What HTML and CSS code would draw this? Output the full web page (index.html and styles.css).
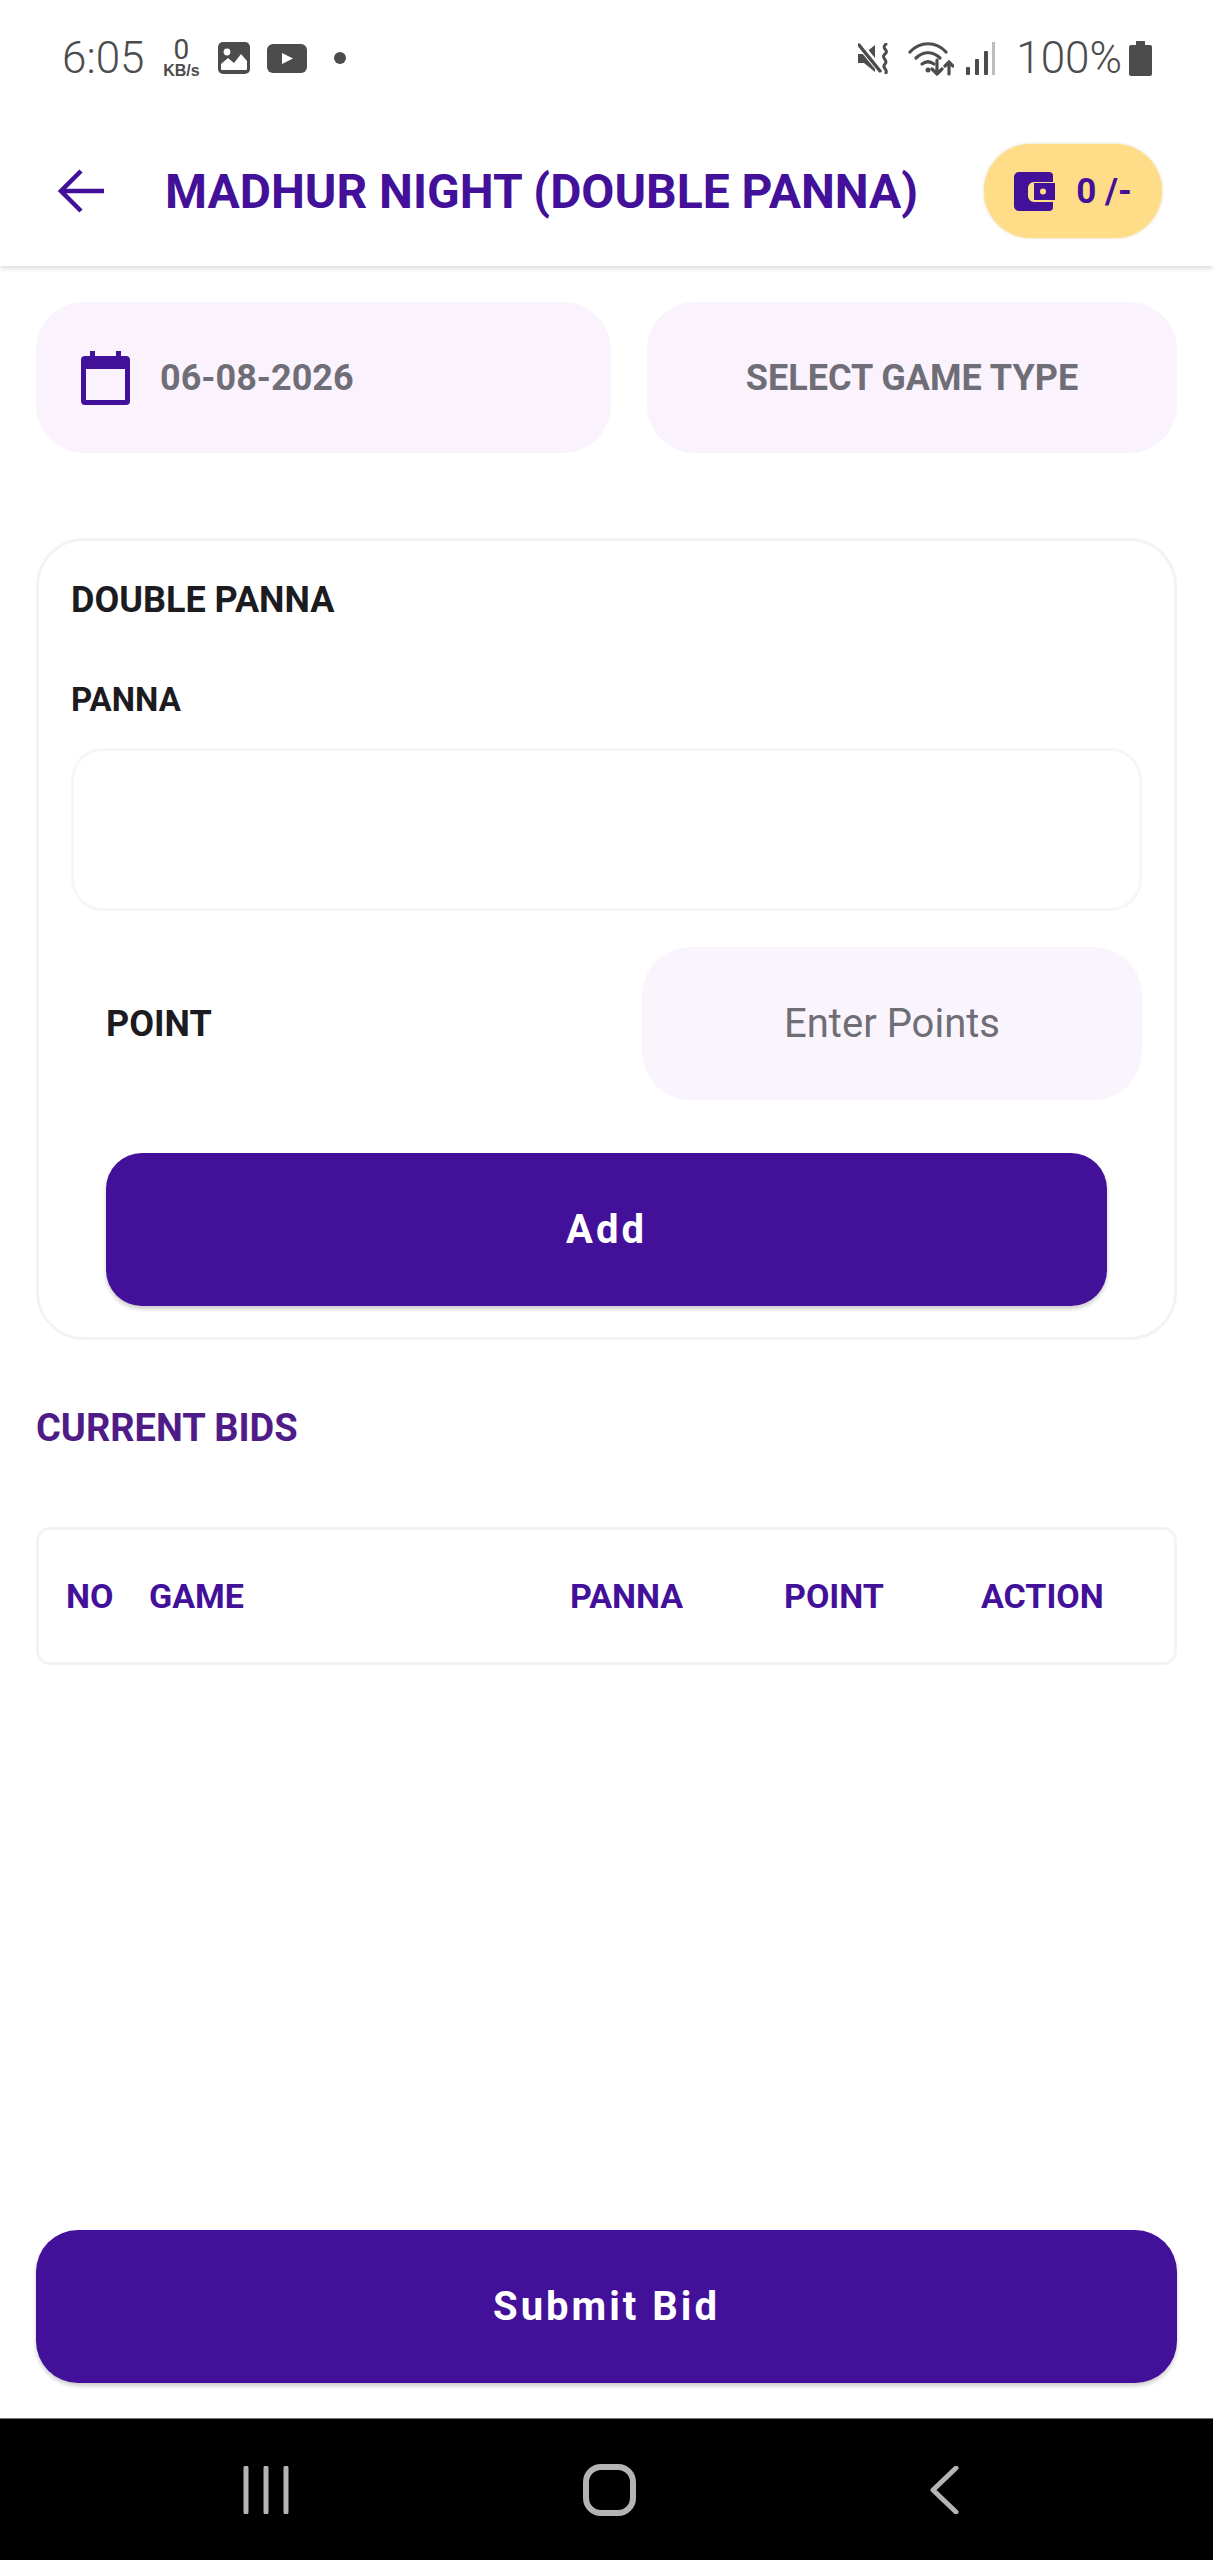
FILE: index.html
```html
<!DOCTYPE html>
<html lang="en">
<head>
  <meta charset="UTF-8">
  <meta name="viewport" content="width=device-width, initial-scale=1">
  <title>Madhur Night (Double Panna)</title>
  <link rel="stylesheet" href="styles.css">
</head>
<body>
  <div class="page">
    <header class="top">
      <div class="status">
        <span class="clock">6:05</span>
        <span class="speed"><b>0</b><i>KB/s</i></span>
        <svg class="ic-photo" viewBox="0 0 32 32"><rect width="32" height="32" rx="5" fill="#4c4c4c"/><circle cx="9" cy="10" r="3.4" fill="#fff"/><path d="M3 27v-5l7-6 6 5 7-9 6 7v8a1 1 0 0 1-1 1H4a1 1 0 0 1-1-1z" fill="#fff"/></svg>
        <svg class="ic-yt" viewBox="0 0 40 29"><rect width="40" height="29" rx="6" fill="#4c4c4c"/><path d="M15 9l11 5.500-11 5.500z" fill="#fff"/></svg>
        <span class="dot"></span>
        <span class="grow"></span>
        <svg class="ic-mute" viewBox="0 0 34 31"><path d="M0 11h6l11-9v27l-11-9H0z" fill="#4c4c4c"/><path d="M1 1l23 28" stroke="#fff" stroke-width="7"/><path d="M1 2l21 26" stroke="#4c4c4c" stroke-width="3.500" stroke-linecap="round"/><path d="M28 1c-6 5 4 6-1 10s4 6 0 10 3 5 1 9" fill="none" stroke="#4c4c4c" stroke-width="3" stroke-linecap="round"/></svg>
        <svg class="ic-wifi" viewBox="0 0 46 35"><g fill="none" stroke="#4c4c4c" stroke-width="3.200" stroke-linecap="round"><path d="M2 11C12 0 28 0 38 11"/><path d="M8 17c7-7 17-7 24 0"/><path d="M14 23c4-3 8-3 12 0"/><path d="M29 19v14M24 28l5 5 5-5"/><path d="M41 33V21M37 25l4-4 4 4"/></g><circle cx="20" cy="29" r="2.500" fill="#4c4c4c"/></svg>
        <svg class="ic-signal" viewBox="0 0 31 33"><rect x="1" y="25" width="4" height="8" rx="1" fill="#4c4c4c"/><rect x="10" y="17" width="4" height="16" rx="1" fill="#4c4c4c"/><rect x="19" y="9" width="4" height="24" rx="1" fill="#4c4c4c"/><rect x="27" y="0" width="3" height="33" fill="#bdbdbd"/></svg>
        <span class="batt-pct">100%</span>
        <svg class="ic-batt" viewBox="0 0 23 35"><path d="M7 0h9v4h5a2 2 0 0 1 2 2v27a2 2 0 0 1-2 2H2a2 2 0 0 1-2-2V6a2 2 0 0 1 2-2h5z" fill="#4c4c4c"/></svg>
      </div>
      <div class="appbar">
        <svg class="ic-back" viewBox="0 0 48 46"><path d="M46 23H4M23 3L3 23l20 20" fill="none" stroke="#43109a" stroke-width="4.500"/></svg>
        <h1 class="title">MADHUR NIGHT (DOUBLE PANNA)</h1>
        <div class="wallet">
          <svg class="ic-wallet" viewBox="0 0 41 39"><path d="M5 0h30a4 4 0 0 1 4 4v6H20a6 6 0 0 0-6 6v8a6 6 0 0 0 6 6h19v5a4 4 0 0 1-4 4H5a5 5 0 0 1-5-5V5a5 5 0 0 1 5-5z" fill="#43109a"/><path d="M20 11h21v17H20z" fill="#43109a"/><circle cx="29" cy="19.500" r="3" fill="#ffdd88"/></svg>
          <span>0 /-</span>
        </div>
      </div>
    </header>

    <main class="content">
      <div class="picker-row">
        <div class="picker">
          <svg class="ic-cal" viewBox="0 0 49 54"><path d="M9 0h5v5h21V0h5v5h5a4 4 0 0 1 4 4v41a4 4 0 0 1-4 4H4a4 4 0 0 1-4-4V9a4 4 0 0 1 4-4h5zM5 18v31h39V18z" fill="#43109a"/></svg>
          <span>06-08-2026</span>
        </div>
        <div class="picker center"><span>SELECT GAME TYPE</span></div>
      </div>

      <section class="card">
        <h2 class="card-title">DOUBLE PANNA</h2>
        <div class="label">PANNA</div>
        <div class="panna-input"></div>
        <div class="point-row">
          <div class="label">POINT</div>
          <div class="point-input">Enter Points</div>
        </div>
        <button class="btn btn-add">Add</button>
      </section>

      <h2 class="bids-title">CURRENT BIDS</h2>
      <div class="bids">
        <span>NO</span>
        <span>GAME</span>
        <span>PANNA</span>
        <span>POINT</span>
        <span>ACTION</span>
      </div>

      <button class="btn btn-submit">Submit Bid</button>
    </main>

    <footer class="navbar">
      <svg class="ic-recent" viewBox="0 0 46 48"><path d="M3 2v44M23 2v44M43 2v44" stroke="#b4b4b4" stroke-width="5" stroke-linecap="round"/></svg>
      <svg class="ic-home" viewBox="0 0 53 52"><rect x="3" y="3" width="47" height="46" rx="15" fill="none" stroke="#b4b4b4" stroke-width="6"/></svg>
      <svg class="ic-navback" viewBox="0 0 29 48"><path d="M26 2L3 24l23 22" fill="none" stroke="#b4b4b4" stroke-width="5" stroke-linecap="round" stroke-linejoin="round"/></svg>
    </footer>
  </div>
</body>
</html>
```

FILE: styles.css
```css
body {
  margin: 0;
  padding: 0;
  background-color: #fff;
  font-family: Roboto, "Liberation Sans", sans-serif;
}
.page {
  display: flex;
  flex-direction: column;
  height: 2560px;
  overflow: hidden;
}

/* status bar + app bar */
.top {
  height: 266px;
  background: #fff;
  box-shadow: 0 2px 5px rgba(0,0,0,0.16);
  position: relative;
}
.status {
  display: flex;
  align-items: center;
  height: 116px;
  padding: 0 61px 0 62px;
  color: #4c4c4c;
}
.clock {
  font-size: 44px;
  font-weight: 300;
}
.speed {
  display: flex;
  flex-direction: column;
  align-items: center;
  margin-left: 17px;
  width: 40px;
  line-height: 1;
}
.speed b {
  font-size: 28px;
  font-weight: 400;
  line-height: 26px;
}
.speed i {
  font-size: 16px;
  font-weight: 700;
  font-style: normal;
  font-family: "Liberation Sans", sans-serif;
}
.ic-photo { width: 32px; height: 32px; margin-left: 17px; }
.ic-yt { width: 40px; height: 29px; margin-left: 17px; }
.dot {
  width: 12px;
  height: 12px;
  border-radius: 50%;
  background: #4c4c4c;
  margin-left: 27px;
}
.grow { flex: 1; }
.ic-mute { width: 34px; height: 31px; }
.ic-wifi { width: 46px; height: 35px; margin-left: 16px; }
.ic-signal { width: 31px; height: 33px; margin-left: 11px; }
.batt-pct {
  font-size: 44px;
  font-weight: 300;
  margin-left: 20px;
}
.ic-batt { width: 23px; height: 35px; margin-left: 7px; }

.appbar {
  display: flex;
  align-items: center;
  height: 150px;
  padding: 0 51px 0 58px;
}
.ic-back { width: 48px; height: 46px; flex: none; }
.title {
  margin: 0 0 0 59px;
  font-size: 48px;
  font-weight: 700;
  color: #43109a;
  white-space: nowrap;
  flex: 1;
}
.wallet {
  display: flex;
  align-items: center;
  justify-content: center;
  gap: 21px;
  width: 178px;
  height: 94px;
  border-radius: 47px;
  background: #ffdd88;
  box-shadow: 0 0 3px rgba(200,170,90,0.5);
  color: #43109a;
  font-size: 35px;
  font-weight: 700;
}
.ic-wallet { width: 41px; height: 39px; }

/* body */
.content {
  flex: 1;
  display: flex;
  flex-direction: column;
  padding: 36px 36px 35px;
}
.picker-row {
  display: flex;
  gap: 36px;
}
.picker {
  flex: 1;
  display: flex;
  align-items: center;
  gap: 30px;
  height: 151px;
  padding-left: 45px;
  border-radius: 48px;
  background: #faf3fd;
  color: #6f6e76;
  font-size: 36px;
  font-weight: 700;
}
.picker.center {
  justify-content: center;
  padding-left: 0;
}
.ic-cal { width: 49px; height: 54px; }

.card {
  margin-top: 85px;
  padding: 37px 32px 31px;
  border: 3px solid #f3f3f4;
  border-radius: 48px;
}
.card-title {
  margin: 0;
  font-size: 36px;
  line-height: 44px;
  font-weight: 700;
  color: #1c1b1f;
}
.label {
  margin-top: 58px;
  font-size: 33px;
  line-height: 40px;
  font-weight: 700;
  color: #1c1b1f;
}
.panna-input {
  height: 157px;
  margin-top: 28px;
  border: 3px solid #f6f5fa;
  border-radius: 32px;
}
.point-row {
  display: flex;
  align-items: center;
  justify-content: space-between;
  margin-top: 36px;
  padding-left: 35px;
}
.point-row .label {
  margin-top: 0;
  font-size: 36px;
}
.point-input {
  display: flex;
  align-items: center;
  justify-content: center;
  width: 500px;
  height: 153px;
  border-radius: 48px;
  background: #faf5fd;
  color: #6f6e76;
  font-size: 40px;
}
.btn {
  display: block;
  border: none;
  background: #43109a;
  color: #fff;
  font-family: inherit;
  font-size: 40px;
  font-weight: 700;
  letter-spacing: 3px;
  box-shadow: 0 3px 4px rgba(0,0,0,0.2);
}
.btn-add {
  width: 1001px;
  height: 153px;
  margin: 53px 0 0 35px;
  border-radius: 36px;
}
.bids-title {
  margin: 64px 0 0;
  font-size: 38px;
  line-height: 48px;
  font-weight: 700;
  color: #4f1c87;
}
.bids {
  display: grid;
  grid-template-columns: 83px 421px 214px 197px 1fr;
  align-items: center;
  height: 132px;
  margin-top: 75px;
  padding-left: 27px;
  border: 3px solid #f3f3f4;
  border-radius: 14px;
  color: #43109a;
  font-size: 34px;
  font-weight: 700;
}
.btn-submit {
  width: 100%;
  height: 153px;
  margin-top: auto;
  border-radius: 42px;
}

.navbar {
  display: flex;
  align-items: center;
  flex: none;
  height: 141px;
  border-top: 1px solid #777;
  background: #000;
  padding: 0 254px 0 243px;
  justify-content: space-between;
}
.ic-recent { width: 46px; height: 48px; }
.ic-home { width: 53px; height: 52px; }
.ic-navback { width: 29px; height: 48px; }
```
